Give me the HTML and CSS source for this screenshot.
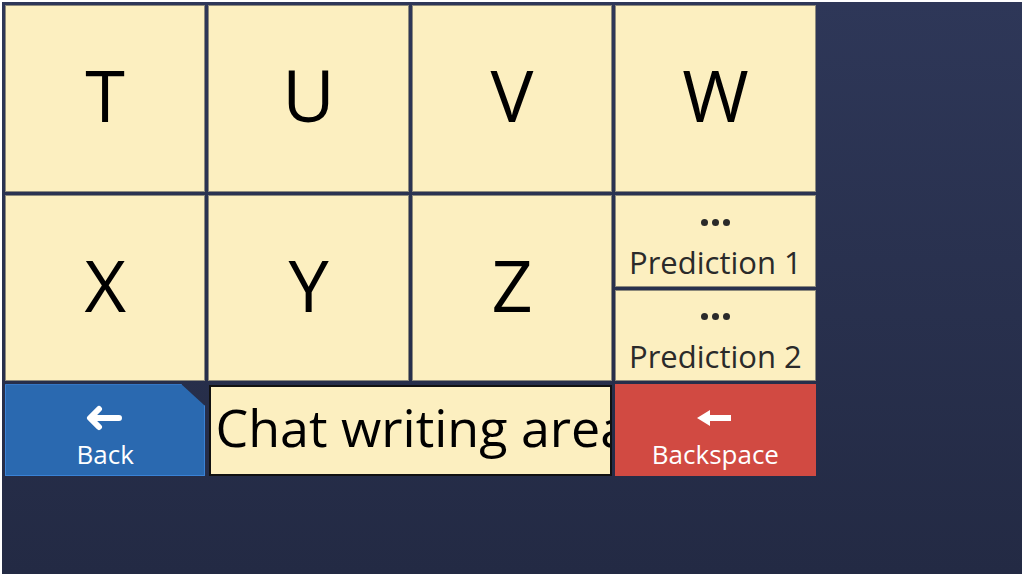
FILE: index.html
```html
<html>
<head>
    <meta charset="UTF-8">
    <meta name="viewport" content="width=device-width, initial-scale=1.0">
    <title>Keyboard</title>
    <link rel="stylesheet" href="styles.css">
</head>
<body>
<main class="board">
    <div class="key letter top c1">T</div>
    <div class="key letter top c2">U</div>
    <div class="key letter top c3">V</div>
    <div class="key letter top c4">W</div>

    <div class="key letter mid c1">X</div>
    <div class="key letter mid c2">Y</div>
    <div class="key letter mid c3">Z</div>
    <div class="key prediction pred-1">
        <span class="dots"><i></i><i></i><i></i></span>
        <span>Prediction 1</span>
    </div>
    <div class="key prediction pred-2">
        <span class="dots"><i></i><i></i><i></i></span>
        <span>Prediction 2</span>
    </div>

    <div class="key action back">
        <svg width="40" height="26" viewBox="0 0 40 26">
            <path d="M14 4 L5 13 L14 22 M6 13 H34" fill="none" stroke="white" stroke-width="6" stroke-linecap="round" stroke-linejoin="round"/>
        </svg>
        <span>Back</span>
    </div>
    <div class="chat">Chat writing area</div>
    <div class="key action backspace">
        <svg width="40" height="26" viewBox="0 0 40 26">
            <path d="M2 13 L15 5 V10 H36 V16 H15 V21 Z" fill="white"/>
        </svg>
        <span>Backspace</span>
    </div>
</main>
</body>
</html>
```

FILE: styles.css
```css
:root {
    --bg-top: #2e3758;
    --bg-bottom: #232a44;
    --cream: #fcefc0;
    --cell-edge: #8d8a7c;
    --blue: #2a69b0;
    --red: #d14a42;
}

body, html {
    margin: 0;
    padding: 0;
    height: 100%;
    background: white;
    font-family: 'Open Sans', 'Noto Sans', sans-serif;
}

.board {
    box-sizing: border-box;
    height: 572px;
    margin: 2px;
    padding: 3px;
    display: grid;
    grid-template-columns: repeat(5, 1fr);
    grid-template-rows: repeat(6, 1fr);
    gap: 3px;
    background: linear-gradient(to bottom, var(--bg-top), var(--bg-bottom));
}

.key {
    box-sizing: border-box;
    background-color: var(--cream);
    border: 1px solid var(--cell-edge);
    display: flex;
    flex-direction: column;
    justify-content: center;
    align-items: center;
    overflow: hidden;
}

.top { grid-row: 1 / span 2; }
.mid { grid-row: 3 / span 2; }
.c1 { grid-column: 1; }
.c2 { grid-column: 2; }
.c3 { grid-column: 3; }
.c4 { grid-column: 4; }

.letter {
    font-size: 72px;
    color: black;
    line-height: 1;
    padding-bottom: 8px;
}

.prediction {
    grid-column: 4;
    font-size: 31px;
    color: #2a2a2a;
    line-height: 1.1;
    padding-top: 16px;
}

.pred-1 { grid-row: 3; }
.pred-2 { grid-row: 4; }

.dots {
    display: flex;
    gap: 4px;
    margin-bottom: 19px;
}

.dots i {
    width: 7px;
    height: 7px;
    border-radius: 50%;
    background-color: #2a2a2a;
}

.action {
    color: white;
    font-size: 26px;
    line-height: 1;
    gap: 10px;
    padding-top: 12px;
}

.back {
    grid-column: 1;
    grid-row: 5;
    background-color: var(--blue);
    border: 1px solid #3a82d6;
    clip-path: polygon(0 0, calc(100% - 24px) 0, 100% 22px, 100% 100%, 0 100%);
}

.backspace {
    grid-column: 4;
    grid-row: 5;
    background-color: var(--red);
    border: none;
}

.chat {
    grid-column: 2 / span 2;
    grid-row: 5;
    box-sizing: border-box;
    margin-left: 1px;
    margin-top: 1px;
    background-color: var(--cream);
    border: 2px solid #111;
    font-size: 52px;
    white-space: nowrap;
    overflow: hidden;
    padding: 6px 0 0 4px;
    line-height: 1.3;
}
```
